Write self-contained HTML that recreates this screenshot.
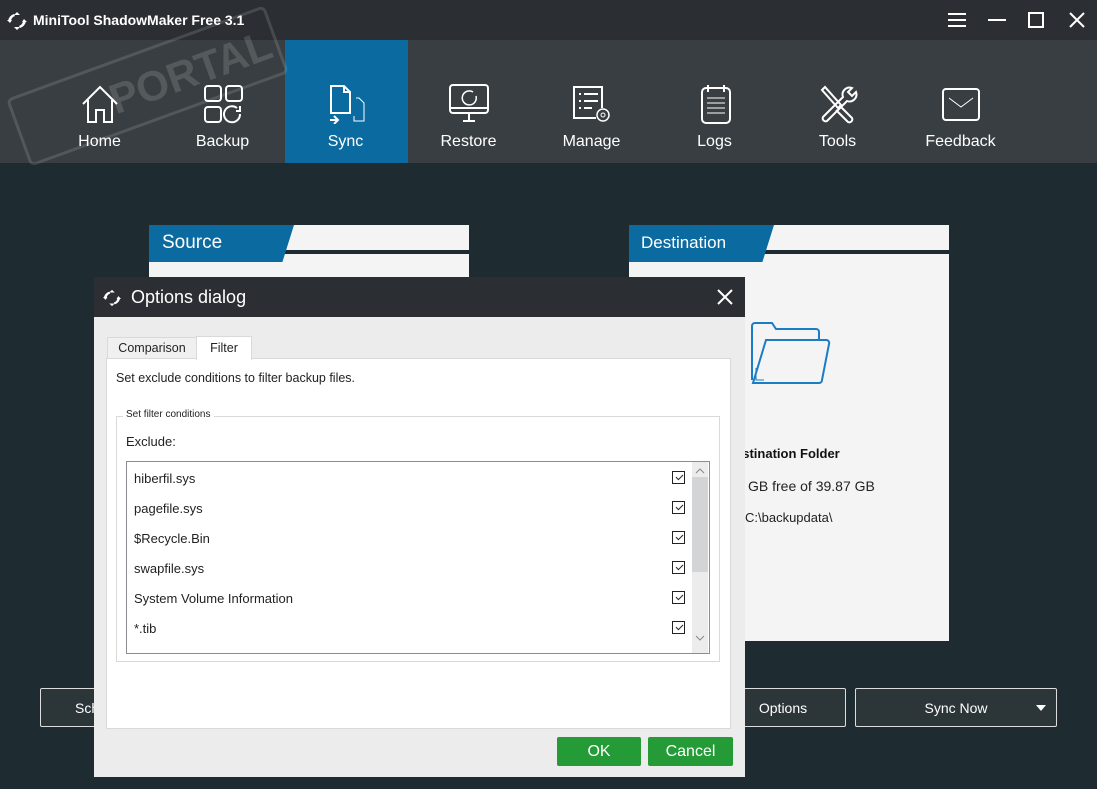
<!DOCTYPE html>
<html><head><meta charset="utf-8"><style>
*{margin:0;padding:0;box-sizing:border-box}
body{width:1097px;height:789px;overflow:hidden;background:#1e2b31;font-family:"Liberation Sans",Arial,sans-serif;position:relative}
.a{position:absolute}
.nav{left:0;top:40px;width:1097px;height:123px;background:#383e42}
.ni{top:40px;width:123px;height:123px;text-align:center;color:#fff;font-size:16px}
.ni span{position:absolute;left:0;right:0;top:93px}
.ni svg{position:absolute;left:42px;top:44px}
.txt{font-size:13px;color:#222}
.row{left:134px;font-size:13px;color:#222}
.cb{left:672px;width:13px;height:13px;border:1px solid #222;background:#fff}
.cb:after{content:"";position:absolute;left:3px;top:1px;width:6px;height:3px;border-left:1.5px solid #222;border-bottom:1.5px solid #222;transform:rotate(-45deg) translate(-1px,1px)}
.btn{border:1px solid #ddd;border-radius:2px;background:#2c3538;color:#fff;font-size:14px;text-align:center;line-height:38px}
.g{background:#249b37;color:#fff;font-size:16px;text-align:center;line-height:29px;border-radius:2px}
</style></head><body>
<div class="a" style="left:0;top:0;width:1097px;height:40px;background:#2b2f33"></div>
<svg class="a" style="left:6px;top:10px" width="22" height="22" viewBox="0 0 22 22" fill="#fff"><path d="M11 2l3 3h-6z M11 20l3-3h-6z M2 11a9 9 0 0 1 6-7l1 2a6 6 0 0 0-4 5z M20 11a9 9 0 0 1-6 7l-1-2a6 6 0 0 0 4-5z M1 10h5l-2 3z M21 12h-5l2-3z"/></svg>
<div class="a" style="left:33px;top:12px;color:#fff;font-size:14px;font-weight:bold">MiniTool ShadowMaker Free 3.1</div>
<svg class="a" style="left:946px;top:12px" width="140" height="16" stroke="#fff" stroke-width="2" fill="none"><path d="M2 2h18M2 8h18M2 14h18"/><path d="M42 8h18"/><rect x="83" y="1" width="14" height="14"/><path d="M124 1l14 14M138 1l-14 14"/></svg>
<div class="a nav"></div>
<div class="a" style="left:285px;top:40px;width:123px;height:123px;background:#0b6a9f"></div>
<!-- watermark -->
<div class="a" style="left:10px;top:50px;width:275px;height:72px;border:3px solid rgba(255,255,255,.13);border-radius:6px;transform:rotate(-20deg);color:rgba(255,255,255,.14);font-size:42px;font-weight:bold;line-height:70px;padding-left:95px">PORTAL</div>
<div class="a ni" style="left:38px"><svg width="40" height="40" fill="none" stroke="#fff" stroke-width="2"><path d="M3 20L20 3l17 17M8 16v22h8V26h8v12h8V16"/></svg><span>Home</span></div>
<div class="a ni" style="left:161px"><svg width="40" height="40" fill="none" stroke="#fff" stroke-width="2"><rect x="2" y="2" width="16" height="15" rx="3"/><rect x="23" y="2" width="16" height="15" rx="3"/><rect x="2" y="23" width="16" height="15" rx="3"/><path d="M37 30a8 8 0 1 1-3-6M37 22v5h-4"/></svg><span>Backup</span></div>
<div class="a ni" style="left:284px"><svg width="40" height="40" fill="none" stroke="#fff" stroke-width="2"><path d="M5 2h13l6 6v21H5z M18 2v6h6"/><path d="M30 14h3l5 5v18H28v-5" stroke-width="1"/><path d="M8 32l4 4-4 4M4 36h8" stroke-width="2"/></svg><span>Sync</span></div>
<div class="a ni" style="left:407px"><svg width="40" height="40" fill="none" stroke="#fff" stroke-width="2"><rect x="1" y="1" width="38" height="28" rx="3"/><path d="M1 24h38M14 37h12M20 29v8"/><path d="M27 12a7 7 0 1 1-3-4" stroke-width="1.5"/></svg><span>Restore</span></div>
<div class="a ni" style="left:530px"><svg width="40" height="40" fill="none" stroke="#fff" stroke-width="2"><path d="M30 24V3H2v31h22"/><path d="M7 10h2M12 10h14M7 17h2M12 17h14M7 24h2M12 24h8"/><circle cx="31" cy="31" r="6" stroke-width="1.5"/><circle cx="31" cy="31" r="2" stroke-width="1"/></svg><span>Manage</span></div>
<div class="a ni" style="left:653px"><svg width="40" height="40" fill="none" stroke="#fff" stroke-width="2"><rect x="7" y="4" width="28" height="35" rx="4"/><path d="M13 1v7M29 1v7M13 4h16"/><path d="M12 14h18M12 19h18M12 24h18M12 29h18" stroke-width="1"/></svg><span>Logs</span></div>
<div class="a ni" style="left:776px"><svg width="40" height="40" fill="none" stroke="#fff" stroke-width="2"><path d="M4 6l3-3 16 18-3 3zM22 22l12 12a3 3 0 0 1-4 4L18 26"/><path d="M34 4a7 7 0 0 0-9 9L5 33a3 3 0 0 0 4 4l20-20a7 7 0 0 0 9-9l-4 4-4-4z"/></svg><span>Tools</span></div>
<div class="a ni" style="left:899px"><svg width="40" height="40" fill="none" stroke="#fff" stroke-width="2"><rect x="2" y="5" width="36" height="31" rx="3"/><path d="M8 14l12 9 12-9" stroke-width="1"/></svg><span>Feedback</span></div>
<div class="a" style="left:149px;top:225px;width:320px;height:60px;background:#f4f4f4"></div>
<div class="a" style="left:149px;top:250px;width:320px;height:4px;background:#1e2b31"></div>
<div class="a" style="left:149px;top:225px;width:145px;height:37px;background:#0b6a9f;clip-path:polygon(0 0,100% 0,92% 100%,0 100%);color:#fff;font-size:19px;line-height:36px;padding-left:13px">Source</div>
<div class="a" style="left:629px;top:225px;width:320px;height:416px;background:#f4f4f4"></div>
<div class="a" style="left:629px;top:250px;width:320px;height:4px;background:#1e2b31"></div>
<div class="a" style="left:629px;top:225px;width:145px;height:37px;background:#0b6a9f;clip-path:polygon(0 0,100% 0,92% 100%,0 100%);color:#fff;font-size:17px;line-height:36px;padding-left:12px">Destination</div>
<svg class="a" style="left:748px;top:320px" width="84" height="68" fill="none" stroke="#1a7cc4" stroke-width="2"><path d="M4 60V6a3 3 0 0 1 3-3h17l4 6h40a3 3 0 0 1 3 3v8"/><path d="M18 20h60a3 3 0 0 1 3 4l-7 36a3 3 0 0 1-3 3H5z"/><path d="M8 48v12h8" stroke-width="1"/></svg>
<div class="a" style="left:735px;top:446px;font-size:13px;font-weight:bold;color:#111">estination Folder</div>
<div class="a txt" style="left:748px;top:478px;font-size:14px">GB free of 39.87 GB</div>
<div class="a txt" style="left:745px;top:510px">C:\backupdata\</div>
<div class="a btn" style="left:40px;top:688px;width:200px;height:39px;text-align:left;padding-left:34px">Schedule</div>
<div class="a btn" style="left:700px;top:688px;width:146px;height:39px;padding-left:20px">Options</div>
<div class="a btn" style="left:855px;top:688px;width:202px;height:39px">Sync Now</div>
<div class="a" style="left:1036px;top:705px;border-left:5px solid transparent;border-right:5px solid transparent;border-top:6px solid #fff"></div>
<div class="a" style="left:94px;top:277px;width:651px;height:500px;background:#ececec"></div>
<div class="a" style="left:94px;top:277px;width:651px;height:40px;background:#2b2f33"></div>
<svg class="a" style="left:102px;top:288px" width="20" height="20" viewBox="0 0 22 22" fill="#fff"><path d="M11 2l3 3h-6z M11 20l3-3h-6z M2 11a9 9 0 0 1 6-7l1 2a6 6 0 0 0-4 5z M20 11a9 9 0 0 1-6 7l-1-2a6 6 0 0 0 4-5z M1 10h5l-2 3z M21 12h-5l2-3z"/></svg>
<div class="a" style="left:131px;top:287px;color:#fff;font-size:18px">Options dialog</div>
<svg class="a" style="left:717px;top:289px" width="16" height="16" stroke="#fff" stroke-width="2"><path d="M1 1l14 14M15 1L1 15"/></svg>
<div class="a" style="left:107px;top:337px;width:90px;height:22px;border:1px solid #d9d9d9;background:#f0f0f0;font-size:12.5px;color:#222;text-align:center;line-height:21px">Comparison</div>
<div class="a" style="left:106px;top:358px;width:625px;height:371px;background:#fff;border:1px solid #d9d9d9"></div>
<div class="a" style="left:196px;top:336px;width:56px;height:24px;border:1px solid #d9d9d9;border-bottom:none;background:#fff;font-size:12.5px;color:#222;text-align:center;line-height:22px">Filter</div>
<div class="a" style="left:116px;top:371px;font-size:12.5px;color:#222">Set exclude conditions to filter backup files.</div>
<div class="a" style="left:116px;top:416px;width:604px;height:246px;border:1px solid #d9d9d9"></div>
<div class="a" style="left:123px;top:409px;font-size:10px;color:#222;background:#fff;padding:0 3px">Set filter conditions</div>
<div class="a" style="left:126px;top:434px;font-size:13px;color:#222">Exclude:</div>
<div class="a" style="left:126px;top:461px;width:584px;height:193px;border:1px solid #8a8e93;background:#fff"></div>
<div class="a" style="left:692px;top:462px;width:16px;height:191px;background:#ececec"></div>
<div class="a" style="left:692px;top:477px;width:16px;height:95px;background:#d3d4d6"></div>
<svg class="a" style="left:694px;top:466px" width="12" height="180" fill="none" stroke="#888" stroke-width="1"><path d="M2 7l4-4 4 4M2 170l4 4 4-4"/></svg>
<div class="a row" style="top:471px">hiberfil.sys</div>
<div class="a row" style="top:501px">pagefile.sys</div>
<div class="a row" style="top:531px">$Recycle.Bin</div>
<div class="a row" style="top:561px">swapfile.sys</div>
<div class="a row" style="top:591px">System Volume Information</div>
<div class="a row" style="top:621px">*.tib</div>
<div class="a cb" style="top:471px"></div>
<div class="a cb" style="top:501px"></div>
<div class="a cb" style="top:531px"></div>
<div class="a cb" style="top:561px"></div>
<div class="a cb" style="top:591px"></div>
<div class="a cb" style="top:621px"></div>
<div class="a g" style="left:557px;top:737px;width:84px;height:29px">OK</div>
<div class="a g" style="left:648px;top:737px;width:85px;height:29px">Cancel</div>
</body></html>
